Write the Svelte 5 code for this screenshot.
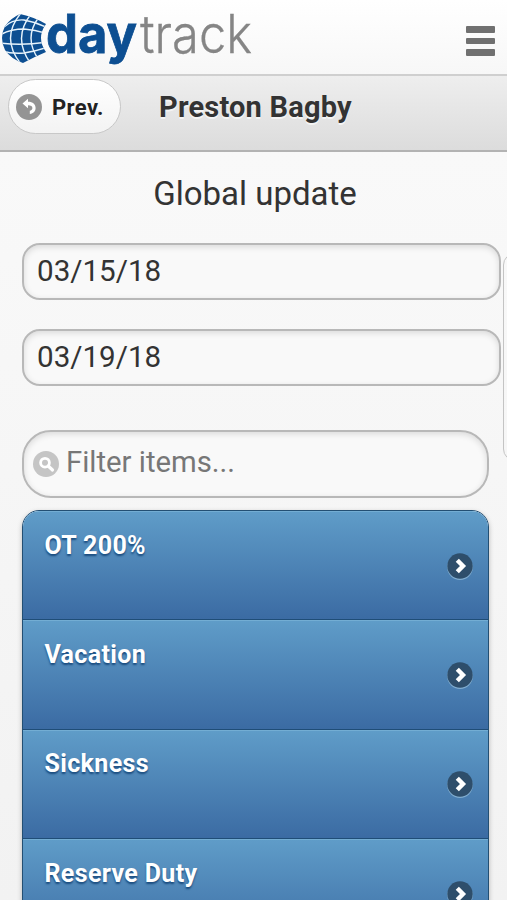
<script>
  // Absence types offered in the global update list.
  const items = ['OT 200%', 'Vacation', 'Sickness', 'Reserve Duty'];

  let from = '03/15/18';
  let to = '03/19/18';
  let filter = '';

  $: visible = items.filter((item) => item.toLowerCase().includes(filter.toLowerCase()));
</script>

<div class="page">
  <header class="brand">
    <svg class="logo" width="270" height="74" viewBox="0 0 270 74" role="img" aria-label="daytrack">
      <clipPath id="globe">
        <path d="M20 14 Q34 17 46 24 Q36 38 46 52 Q34 57 23 63 Q11 59 5 50 Q-1 38 5 26 Q11 18 20 14Z" />
      </clipPath>
      <g clip-path="url(#globe)">
        <rect width="48" height="70" fill="#0d4f92" />
        <g fill="none" stroke="#e6f3fc" stroke-width="1.4">
          <path d="M21 13 Q0 38 21 64" />
          <path d="M31 14 Q12 38 31 64" />
          <path d="M39 17 Q23 38 39 60" />
          <path d="M4 27 Q13 19 24 20 Q36 22 48 28" />
          <path d="M0 35 Q10 29 24 29 Q36 30 48 34" />
          <path d="M0 43 Q22 46 48 42" />
          <path d="M2 51 Q12 54 24 53 Q36 51 48 47" />
        </g>
      </g>
      <text class="day" x="46" y="53" textLength="91" lengthAdjust="spacingAndGlyphs">day</text>
      <text class="track" x="140" y="53" textLength="112" lengthAdjust="spacingAndGlyphs">track</text>
    </svg>
    <button class="menu" type="button" aria-label="Menu">
      <span></span><span></span><span></span>
    </button>
  </header>

  <div class="bar">
    <button class="prev" type="button">
      <svg width="26" height="26" viewBox="0 0 26 26" aria-hidden="true">
        <circle cx="13" cy="13" r="13" fill="#949494" />
        <path d="M6.5 9.5 L12 4.8 V7.7 C17 7.7 19.6 10.4 19.6 14 C19.6 17.4 17.4 19.6 13.8 19.9 V16.8 C15.4 16.5 16.4 15.5 16.4 14 C16.4 12.2 15 11.2 12 11.2 V14.2Z" fill="#fff" />
      </svg>
      Prev.
    </button>
    <h1>Preston Bagby</h1>
  </div>

  <main>
    <h2>Global update</h2>
    <input class="date" type="text" aria-label="From" bind:value={from} />
    <input class="date" type="text" aria-label="To" bind:value={to} />

    <label class="search">
      <svg width="26" height="26" viewBox="0 0 26 26" aria-hidden="true">
        <circle cx="13" cy="13" r="13" fill="#c5c5c5" />
        <circle cx="12" cy="11.7" r="4.4" fill="none" stroke="#fff" stroke-width="2.8" />
        <path d="M15.2 15 L19.5 19" stroke="#fff" stroke-width="3.2" stroke-linecap="round" />
      </svg>
      <input type="text" placeholder="Filter items..." bind:value={filter} />
    </label>

    <ul>
      {#each visible as item}
        <li>
          <span>{item}</span>
          <svg width="26" height="28" viewBox="0 0 26 28" aria-hidden="true">
            <circle cx="13" cy="14.2" r="12.8" fill="#82aed0" />
            <circle cx="13" cy="13" r="12.7" fill="#2e4e6b" />
            <path d="M10.3 7.2 L16 13 L10.3 18.8" fill="none" stroke="#fff" stroke-width="4.4" />
          </svg>
        </li>
      {/each}
    </ul>
  </main>

  <!-- Edge of the off-canvas panel, peeking in from the right. -->
  <div class="panel-edge"></div>
</div>

<style>
  :global(body) {
    margin: 0;
    overflow: hidden;
  }

  .page {
    position: relative;
    height: 900px;
    overflow: hidden;
    background: linear-gradient(#f9f9f9 150px, #f2f2f2);
    color: #333;
    font-family: Roboto, 'Liberation Sans', sans-serif;
  }

  .brand {
    box-sizing: border-box;
    height: 76px;
    display: flex;
    justify-content: space-between;
    align-items: flex-start;
    padding-right: 12px;
    border-bottom: 2px solid #cfcfcf;
    background: linear-gradient(#fff, #f7f7f7);
  }

  .logo {
    overflow: visible;
  }

  .logo text {
    font-family: Inter, 'Open Sans', sans-serif;
    font-size: 53px;
  }

  .logo .day {
    font-weight: 700;
    fill: #0d4f92;
    stroke: #0d4f92;
    stroke-width: 0.8px;
  }

  .logo .track {
    font-weight: 300;
    fill: #858585;
    stroke: #858585;
    stroke-width: 0.3px;
  }

  .menu {
    display: flex;
    flex-direction: column;
    gap: 5px;
    margin-top: 26px;
    padding: 0;
    border: none;
    background: none;
  }

  .menu span {
    width: 29px;
    height: 6.5px;
    border-radius: 1px;
    background: #707070;
  }

  .bar {
    box-sizing: border-box;
    height: 76px;
    display: flex;
    align-items: flex-start;
    padding: 3px 0 0 8px;
    border-bottom: 2px solid #b3b3b3;
    background: linear-gradient(#eeeeee, #dcdcdc);
  }

  .prev {
    box-sizing: border-box;
    width: 113px;
    height: 55px;
    display: flex;
    align-items: center;
    gap: 10px;
    padding: 1px 0 0 7px;
    border: 1px solid #c8c8c8;
    border-radius: 28px;
    background: linear-gradient(#fff, #f3f3f3);
    color: #222;
    font: 700 22px Roboto, sans-serif;
    letter-spacing: 0.4px;
    text-shadow: 0 1px 0 #fff;
  }

  h1 {
    margin: 10px 0 0 38px;
    font-size: 29px;
    line-height: 36px;
    font-weight: 700;
    letter-spacing: 0.2px;
    text-shadow: 0 2px 0 #f4f4f4;
  }

  main {
    padding: 22px 18px 0 22px;
  }

  h2 {
    margin: 0 0 30px;
    padding-right: 1px;
    font-size: 33px;
    line-height: 39px;
    font-weight: 400;
    text-align: center;
  }

  input {
    color: #333;
    font: 400 29.6px Roboto, sans-serif;
  }

  .date {
    box-sizing: border-box;
    display: block;
    width: 479px;
    height: 57px;
    margin-bottom: 29px;
    padding: 0 13px 1px;
    border: 2px solid #b8b8b8;
    border-radius: 18px;
    background: #f9f9f9;
    box-shadow: inset 0 2px 6px rgba(0, 0, 0, 0.13);
  }

  .search {
    box-sizing: border-box;
    width: 467px;
    height: 68px;
    display: flex;
    align-items: center;
    gap: 7px;
    margin: 44px 0 12px;
    padding: 0 9px;
    border: 2px solid #b8b8b8;
    border-radius: 29px;
    background: #f9f9f9;
    box-shadow: inset 0 2px 6px rgba(0, 0, 0, 0.13);
  }

  .search input {
    flex: 1;
    min-width: 0;
    padding: 0 0 5px;
    border: none;
    background: none;
    font-size: 29.3px;
  }

  .search input::placeholder {
    color: #777;
    opacity: 1;
  }

  ul {
    margin: 0;
    padding: 0;
    overflow: hidden;
    list-style: none;
    border: 1px solid #234f73;
    border-radius: 17px 17px 0 0;
    box-shadow: 0 2px 5px rgba(0, 0, 0, 0.25);
  }

  li {
    box-sizing: border-box;
    height: 109.3px;
    display: flex;
    align-items: center;
    justify-content: space-between;
    padding: 2px 15px 0 21.5px;
    border-top: 1px solid #73add3;
    border-bottom: 1.5px solid #1f4d77;
    background: linear-gradient(#5f9cc8, #3b6ba3);
    color: #fff;
    font-size: 25px;
    font-weight: 700;
    letter-spacing: 0.35px;
    text-shadow: 0 2px 2px #194b7e;
  }

  li span {
    margin-bottom: 43px;
  }

  .panel-edge {
    position: absolute;
    top: 253px;
    left: 503px;
    width: 30px;
    height: 206px;
    border: 1px solid #c4c4c4;
    border-radius: 12px;
  }
</style>
